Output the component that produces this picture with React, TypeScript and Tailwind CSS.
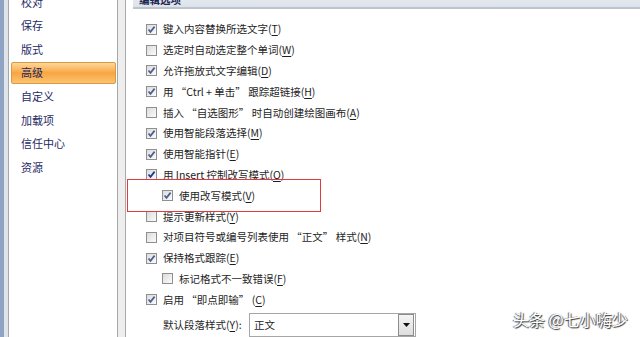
import React from "react";

type Row = { label: React.ReactNode; checked: boolean; indent?: boolean; dark?: boolean };

const U = ({ children }: { children: React.ReactNode }) => <span className="underline underline-offset-2">{children}</span>;

const rows: Row[] = [
  { label: <>键入内容替换所选文字(<U>T</U>)</>, checked: true },
  { label: <>选定时自动选定整个单词(<U>W</U>)</>, checked: false },
  { label: <>允许拖放式文字编辑(<U>D</U>)</>, checked: true },
  { label: <>用 “Ctrl + 单击” 跟踪超链接(<U>H</U>)</>, checked: true },
  { label: <>插入 “自选图形” 时自动创建绘图画布(<U>A</U>)</>, checked: false },
  { label: <>使用智能段落选择(<U>M</U>)</>, checked: true },
  { label: <>使用智能指针(<U>E</U>)</>, checked: true },
  { label: <>用 Insert 控制改写模式(<U>O</U>)</>, checked: true, dark: true },
  { label: <>使用改写模式(<U>V</U>)</>, checked: true, indent: true },
  { label: <>提示更新样式(<U>Y</U>)</>, checked: false },
  { label: <>对项目符号或编号列表使用 “正文” 样式(<U>N</U>)</>, checked: false },
  { label: <>保持格式跟踪(<U>E</U>)</>, checked: true },
  { label: <>标记格式不一致错误(<U>F</U>)</>, checked: false, indent: true },
  { label: <>启用 “即点即输” (<U>C</U>)</>, checked: true },
];

const side = ["校对", "保存", "版式", "高级", "自定义", "加载项", "信任中心", "资源"];

function Box({ checked, dark }: { checked: boolean; dark?: boolean }) {
  return (
    <div className="w-[11px] h-[11px] border border-[#8f8f8f] bg-gradient-to-br from-[#dcdcdc] to-[#fbfbfb] flex items-center justify-center shrink-0">
      {checked && (
        <svg width="9" height="9" viewBox="0 0 9 9">
          <path d="M1.5 4.5 L3.5 6.8 L7.6 1.6" fill="none" stroke={dark ? "#1b3a8f" : "#4b5f92"} strokeWidth="1.7" />
        </svg>
      )}
    </div>
  );
}

export default function App() {
  return (
    <div
      className="relative w-[640px] h-[337px] overflow-hidden bg-white flex text-[10.5px] text-[#1e1e1e]"
      style={{ fontFamily: '"Noto Sans CJK SC", "Noto Sans", sans-serif' }}
    >
      {/* window edge */}
      <div className="w-[4px] bg-[#8fa3c2] shrink-0" />
      <div className="w-[4px] bg-[#dfe4ea] shrink-0" />
      {/* sidebar */}
      <div className="w-[110px] shrink-0 border-x border-[#a7a7a7] bg-white flex flex-col mt-[-10px] text-[11px]">
        {side.map((s) =>
          s === "高级" ? (
            <div key={s} className="h-[23.6px] flex items-center">
              <div className="ml-[2px] w-[105px] h-[22px] flex items-center pl-[9px] border border-[#d79a46] rounded-[2px] bg-gradient-to-b from-[#fdd898] via-[#f7a640] to-[#fcc46e] text-[#1c2560]">
                {s}
              </div>
            </div>
          ) : (
            <div key={s} className="h-[23.6px] flex items-center pl-[12px] text-[#1f2a66]">
              {s}
            </div>
          )
        )}
      </div>
      <div className="w-[8px] shrink-0 bg-[#eeeeee] border-r border-[#a9a9a9]" />
      {/* main */}
      <div className="flex-1 flex flex-col pl-[7px]">
        <div className="h-[14px] bg-gradient-to-b from-[#e4e8ee] to-[#dae3ed] border-b-2 border-[#bfc4ca] pl-[6px] overflow-hidden">
          <div className="mt-[-8px] font-bold text-[#1c2550]">编辑选项</div>
        </div>
        <div className="flex flex-col pt-[10px]">
          {rows.map((r, i) => (
            <div key={i} className={`h-[20.8px] flex items-center gap-[6px] ${r.indent ? "pl-[29px]" : "pl-[13px]"}`}>
              <Box checked={r.checked} dark={r.dark} />
              <span className="whitespace-nowrap">{r.label}</span>
            </div>
          ))}
          <div className="flex items-center pl-[30px] mt-[3px] h-[24px]">
            <span className="w-[86px] whitespace-nowrap">默认段落样式(<U>Y</U>):</span>
            <div className="w-[167px] h-[24px] border border-[#a6a6a6] flex items-center bg-white">
              <span className="flex-1 pl-[4px]">正文</span>
              <div className="w-[16px] h-[22px] mr-[1px] border border-[#8c8c8c] bg-gradient-to-b from-[#f4f4f4] to-[#dedede] flex items-center justify-center">
                <svg width="7" height="4" viewBox="0 0 7 4"><path d="M0 0 H7 L3.5 4 Z" fill="#111" /></svg>
              </div>
            </div>
          </div>
        </div>
      </div>
      {/* annotation */}
      <div className="absolute left-[127px] top-[179px] w-[194px] h-[33px] border border-[#e0393e]" />
      <div
        className="absolute left-[513px] top-[307px] text-[16px] text-white whitespace-nowrap"
        style={{ textShadow: "1px 1px 1px #333, -1px 0 1px #555" }}
      >
        头条 @七小嗨少
      </div>
    </div>
  );
}
